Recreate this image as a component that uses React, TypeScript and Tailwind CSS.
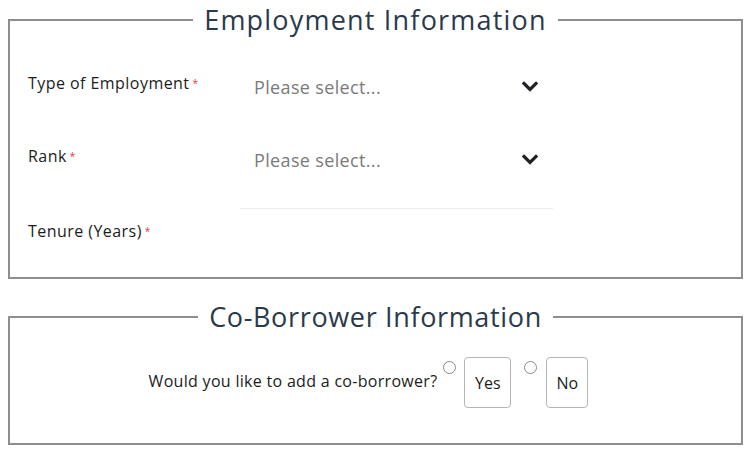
import React from "react";

const Chevron = () => (
  <svg width="16" height="11" viewBox="0 0 16 11" className="block">
    <path d="M2 2.5 L8 8.5 L14 2.5" fill="none" stroke="#1f2328" strokeWidth="3.2" strokeLinecap="square" />
  </svg>
);

const Label = ({ children }: { children: React.ReactNode }) => (
  <div className="w-[212px] text-[16px] tracking-[0.45px] font-medium text-[#1c1c1c] leading-[20px]">
    {children}
    <span className="ml-[3px] text-[10px] align-top text-[#e0393e]">*</span>
  </div>
);

const Select = () => (
  <div className="w-[313px] flex items-center justify-between pl-[14px] pr-[15px] text-[18px] tracking-[0.35px] text-[#7b7b7b] leading-[24px]">
    <span>Please select...</span>
    <Chevron />
  </div>
);

const Radio = () => (
  <span className="block w-[13px] h-[13px] rounded-full border border-[#8a8a8a] bg-white" />
);

export default function App() {
  return (
    <div
      className="min-h-[462px] w-[750px] bg-white pl-[8px] pt-[3px]"
      style={{ fontFamily: '"Open Sans", "Liberation Sans", sans-serif' }}
    >
      <fieldset className="m-0 p-0 w-[735px] h-[276px] border-2 border-[#8e8e8e]">
        <legend className="mx-auto px-[11px] text-[27px] tracking-[1.2px] leading-[34px] text-[#2a3a4b]">
          Employment Information
        </legend>
        <div className="pt-[13px] pl-[18px]">
          <div className="flex items-center h-[73px]">
            <div className="pb-[8px]">
              <Label>Type of Employment</Label>
            </div>
            <Select />
          </div>
          <div className="flex items-center h-[73px]">
            <div className="pb-[8px]">
              <Label>Rank</Label>
            </div>
            <Select />
          </div>
          <div className="flex items-start h-[73px]">
            <div className="pt-[25px]">
              <Label>Tenure (Years)</Label>
            </div>
            <div className="mt-[12px] w-[313px] h-[40px] border-t border-[#ececec]" />
          </div>
        </div>
      </fieldset>
      <fieldset className="m-0 p-0 mt-[21px] w-[735px] h-[145px] border-2 border-[#8e8e8e]">
        <legend className="mx-auto px-[11px] text-[27px] tracking-[0.65px] leading-[34px] text-[#2a3a4b]">
          Co-Borrower Information
        </legend>
        <div className="flex items-start justify-center pt-[23px] pr-[14px]">
          <span className="mt-[14px] text-[16px] tracking-[0.3px] font-medium text-[#1c1c1c] leading-[20px]">
            Would you like to add a co-borrower?
          </span>
          <span className="ml-[6px] mt-[4px]">
            <Radio />
          </span>
          <div className="ml-[8px] w-[47px] h-[51px] rounded-[4px] border border-[#b5b5b5] flex items-center justify-center text-[16px] font-medium text-[#1c1c1c]">
            Yes
          </div>
          <span className="ml-[13px] mt-[4px]">
            <Radio />
          </span>
          <div className="ml-[9px] w-[42px] h-[51px] rounded-[4px] border border-[#b5b5b5] flex items-center justify-center text-[16px] font-medium text-[#1c1c1c]">
            No
          </div>
        </div>
      </fieldset>
    </div>
  );
}
